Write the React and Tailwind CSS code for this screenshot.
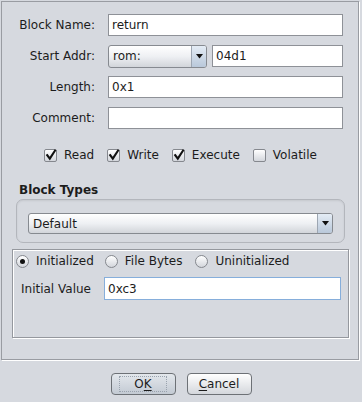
import React from 'react'

// small check box drawn like the Swing look-and-feel one
function Check({ checked, label }) {
  return (
    <div className="flex items-center h-[13px]">
      <div className="w-[13px] h-[13px] rounded-[2px] border border-[#85888e] bg-linear-to-b from-white to-[#d3d6dc] relative">
        {checked && (
          <svg className="absolute -left-px -top-[2px]" width="14" height="14" viewBox="0 0 14 14">
            <path d="M3.2 7.2 L5.8 10.6 L11 2.6" fill="none" stroke="#111" strokeWidth="2.1" strokeLinecap="square" />
          </svg>
        )}
      </div>
      <span className="ml-[7px] leading-[15px]">{label}</span>
    </div>
  )
}

function Radio({ selected, label }) {
  return (
    <div className="flex items-center h-[13px]">
      <div className="w-[13px] h-[13px] rounded-full border border-[#85888e] bg-linear-to-b from-white to-[#d3d6dc] flex items-center justify-center">
        {selected && <div className="w-[5px] h-[5px] rounded-full bg-[#111]" />}
      </div>
      <span className="ml-[7px] leading-[15px]">{label}</span>
    </div>
  )
}

function Combo({ value, className }) {
  return (
    <div className={`flex rounded-[3px] border border-[#868a90] bg-linear-to-b from-white via-[#eef0f3] to-[#d2d5da] overflow-hidden ${className}`}>
      <div className="flex-1 flex items-center pl-[4px]">{value}</div>
      <div className="w-[15px] border-l border-[#9da6b2] bg-linear-to-b from-[#e4ecf5] to-[#b9c8da] flex items-center justify-center">
        <svg width="7" height="5" viewBox="0 0 7 5">
          <path d="M0 0 H7 L3.5 4.5 Z" fill="#111" />
        </svg>
      </div>
    </div>
  )
}

function Field({ value, className = '' }) {
  return (
    <div className={`h-[22px] bg-white border border-[#8e9197] flex items-center px-[3px] ${className}`}>
      {value}
    </div>
  )
}

function Row({ label, children, first }) {
  return (
    <div className={`flex items-center h-[22px] ${first ? 'mt-[12px]' : 'mt-[9px]'}`}>
      <div className="w-[93px] text-right">{label}</div>
      <div className="ml-[13px] flex items-center">{children}</div>
    </div>
  )
}

export default function App() {
  return (
    <div className="w-[362px] h-[402px] bg-[#d6d9df] text-[12px] text-[#1c1c1c] overflow-hidden font-['DejaVu_Sans',sans-serif]">
      <div className="ml-px mt-px w-[358px] h-[359px] border border-[#999ca2] shadow-[1px_1px_0_#fff] flex flex-col">
        <Row label="Block Name:" first>
          <Field value="return" className="w-[235px]" />
        </Row>
        <Row label="Start Addr:">
          <Combo value="rom:" className="w-[99px] h-[23px]" />
          <Field value="04d1" className="w-[131px] ml-[5px]" />
        </Row>
        <Row label="Length:">
          <Field value="0x1" className="w-[235px]" />
        </Row>
        <Row label="Comment:">
          <Field value="" className="w-[235px]" />
        </Row>

        <div className="mt-[20px] flex pl-[42px] gap-[13px]">
          <Check checked label="Read" />
          <Check checked label="Write" />
          <Check checked label="Execute" />
          <Check label="Volatile" />
        </div>

        <div className="mt-[21px] h-[15px] leading-[15px] pl-[17px] font-bold">Block Types</div>

        <div className="mt-px ml-[14px] w-[329px] h-[44px] rounded-[7px] border border-[#b3b6bc] shadow-[inset_0_1px_2px_rgba(0,0,0,0.08)] pt-[13px] pl-[11px]">
          <Combo value="Default" className="w-[305px] h-[21px]" />
        </div>

        <div className="mt-[6px] ml-[10px] w-[337px] h-[89px] border border-[#95989e] shadow-[1px_1px_0_#fff,inset_1px_1px_0_#fff] flex flex-col">
          <div className="mt-[5px] pl-[3px] flex">
            <Radio selected label="Initialized" />
            <div className="ml-[11px]">
              <Radio label="File Bytes" />
            </div>
            <div className="ml-[13px]">
              <Radio label="Uninitialized" />
            </div>
          </div>
          <div className="mt-[9px] flex items-center h-[23px]">
            <div className="pl-[8px] w-[91px]">Initial Value</div>
            <div className="h-[23px] w-[237px] bg-white border border-[#86aedb] flex items-center px-[3px]">0xc3</div>
          </div>
        </div>
      </div>

      <div className="mt-[13px] flex justify-center gap-[11px]">
        <button className="w-[65px] h-[22px] rounded-[4px] border border-[#6d7176] bg-linear-to-b from-[#e3e7ec] to-[#c3cad3] flex items-center justify-center">
          <span className="px-[14px] leading-[14px] outline outline-dotted outline-[#9aa3ae] -outline-offset-0">
            O<span className="underline underline-offset-2">K</span>
          </span>
        </button>
        <button className="w-[65px] h-[22px] rounded-[4px] border border-[#6d7176] bg-linear-to-b from-white to-[#d4d7dc] flex items-center justify-center">
          <span><span className="underline underline-offset-2">C</span>ancel</span>
        </button>
      </div>
    </div>
  )
}
